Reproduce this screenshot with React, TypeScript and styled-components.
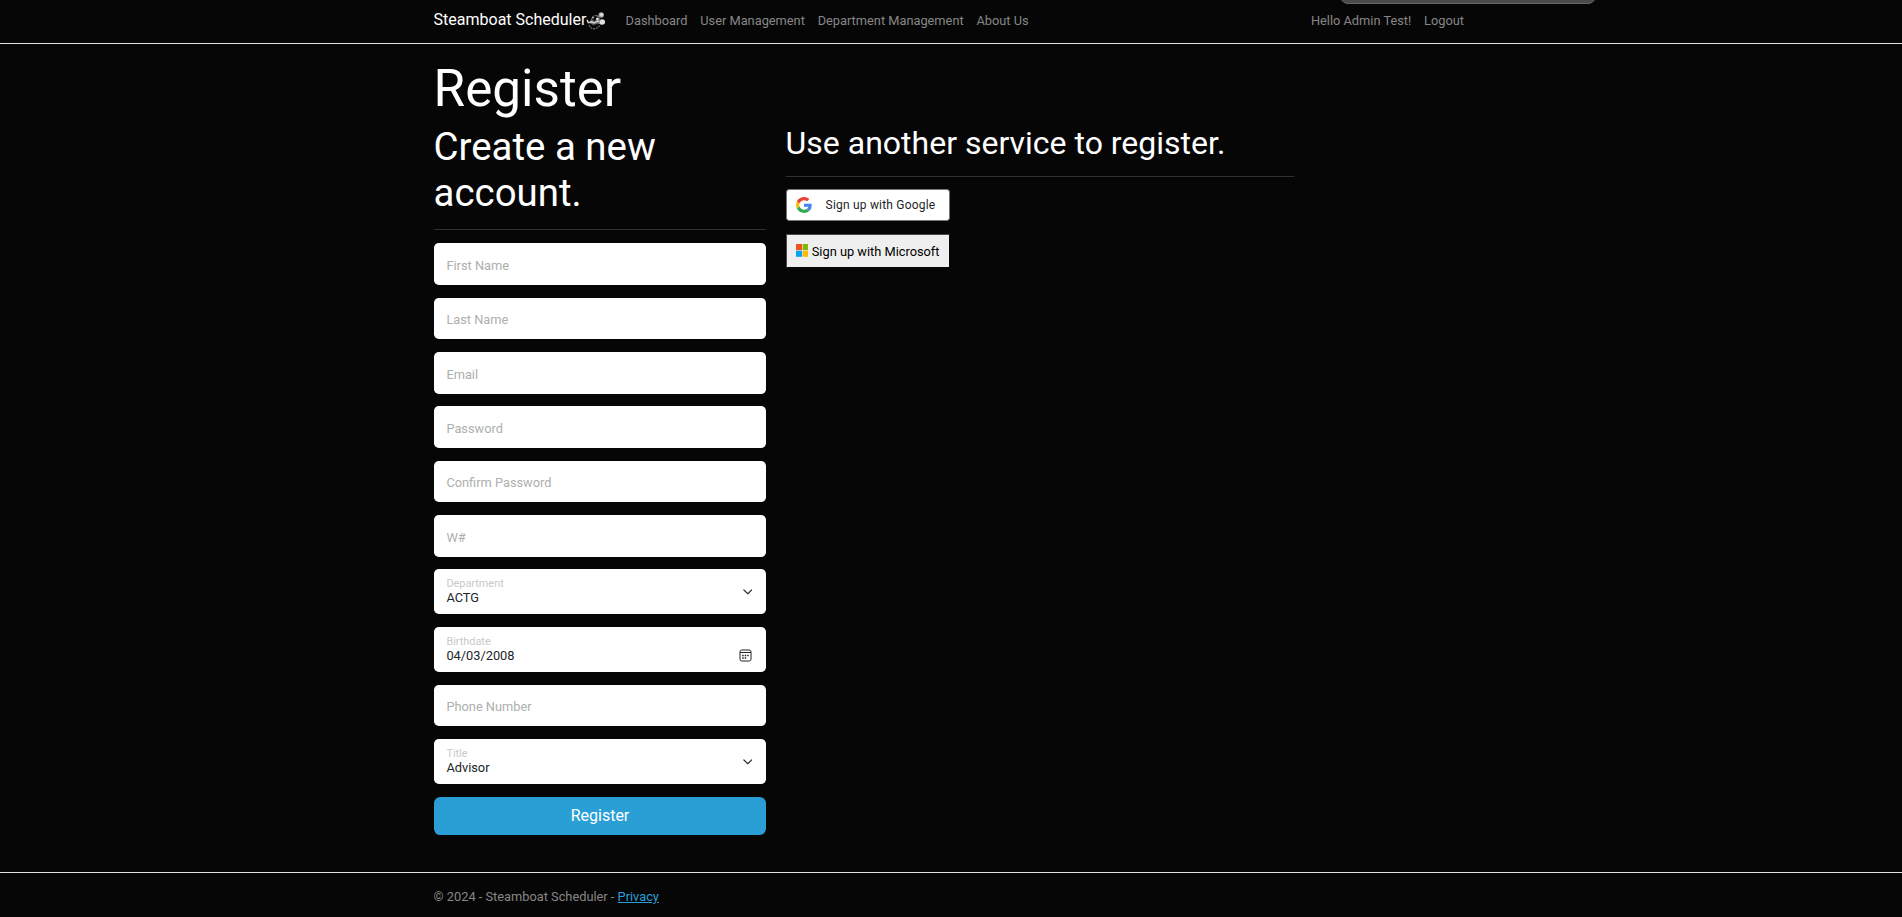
import React from "react";
import styled, { createGlobalStyle } from "styled-components";

const GlobalStyle = createGlobalStyle`
  *, *::before, *::after { box-sizing: border-box; }
  html, body { margin: 0; background: #060606; }
  body {
    font-family: Roboto, "Liberation Sans", sans-serif;
    font-size: 12.8px;
    line-height: 1.5;
    color: #adafae;
    overflow: hidden;
  }
`;

const Page = styled.div`
  position: relative;
  display: flex;
  flex-direction: column;
  width: 1904px;
  height: 917px;
  overflow: hidden;
  background: #060606;
`;

const Container = styled.div`
  width: 1056px;
  margin: 0 auto;
  padding: 0 9.6px;
`;

const Header = styled.header`
  flex: none;
  height: 44px;
  border-bottom: 1px solid #dee2e6;
`;

const NavBar = styled(Container)`
  display: flex;
  align-items: center;
  height: 40px;
`;

const Brand = styled.a`
  display: flex;
  align-items: center;
  width: 172.8px;
  margin-right: 12.8px;
  font-size: 16px;
  line-height: 24px;
  color: #fff;
  white-space: nowrap;
  svg { flex: none; width: 20px; height: 18px; margin-top: 2px; }
`;

const NavGroup = styled.nav<{ $end?: boolean }>`
  display: flex;
  margin-left: ${(p) => (p.$end ? "auto" : "0")};
`;

const NavLink = styled.a`
  padding: 1px 6.4px 0;
  color: #868686;
  white-space: nowrap;
`;

const Overlay = styled.div`
  position: absolute;
  top: -20px;
  left: 1340px;
  width: 256px;
  height: 24px;
  border: 1px solid #666;
  border-radius: 8px;
  background: #4a4a4a;
`;

const Main = styled(Container)`
  flex: 1;
  padding-top: 13.8px;
`;

const PageTitle = styled.h1`
  margin: 0 0 4.76px;
  font-size: 51.2px;
  line-height: 1.2;
  font-weight: 400;
  color: #fff;
`;

const Columns = styled.div`
  display: flex;
  gap: 19.2px;
`;

const Column = styled.section<{ $width: number }>`
  flex: none;
  width: ${(p) => p.$width}px;
`;

const Heading = styled.h2<{ $size: number }>`
  margin: 0;
  font-size: ${(p) => p.$size}px;
  line-height: 1.2;
  font-weight: 400;
  color: #fff;
`;

const Rule = styled.hr`
  height: 1px;
  margin: 13.21px 0 12.8px;
  border: 0;
  background: #303131;
`;

const Form = styled.form`
  display: flex;
  flex-direction: column;
  gap: 12.8px;
`;

const Field = styled.div<{ $filled?: boolean }>`
  display: flex;
  align-items: center;
  justify-content: space-between;
  height: ${(p) => (p.$filled ? 44.8 : 41.6)}px;
  padding: ${(p) => (p.$filled ? 0 : 3)}px 12.8px 0;
  border-radius: 4.8px;
  background: #fff;
  color: #212529;
  svg { flex: none; }
`;

const Placeholder = styled.span`
  color: #adafae;
`;

const Stack = styled.div`
  display: flex;
  flex-direction: column;
  margin-top: -0.3px;
`;

const FieldLabel = styled.span`
  font-size: 10.88px;
  line-height: 13px;
  color: #c8c9c9;
`;

const FieldValue = styled.span`
  line-height: 16px;
`;

const ChevronIcon = styled.svg`
  width: 9.6px;
  height: 9.6px;
  margin-right: 1.5px;
`;

const DateIcon = styled.svg`
  width: 13px;
  height: 13px;
  margin: 11.8px 1.6px 0 0;
`;

const Submit = styled.button`
  height: 38.4px;
  padding: 0;
  border: 0;
  border-radius: 6.4px;
  background: #2a9fd6;
  font: 400 16px/24px Roboto, "Liberation Sans", sans-serif;
  color: #fff;
`;

const Providers = styled.div`
  display: flex;
  flex-direction: column;
  align-items: flex-start;
  gap: 12.8px;
`;

const GoogleButton = styled.button`
  display: flex;
  align-items: center;
  width: 164px;
  height: 32px;
  padding: 0 0 0 9px;
  border: 1px solid #747775;
  border-radius: 3.2px;
  background: #fff;
  font: 400 12px/16px Roboto, "Liberation Sans", sans-serif;
  letter-spacing: 0.2px;
  color: #1f1f1f;
  white-space: nowrap;
  svg { width: 16px; height: 16px; margin-right: 14px; }
`;

const MicrosoftButton = styled.button`
  display: flex;
  align-items: center;
  width: 164px;
  height: 33.6px;
  padding: 0 0 0 9px;
  border: 1px solid #4a4a4a;
  border-right-color: #060606;
  border-bottom-color: #060606;
  background: #efefef;
  font: 400 12.8px/19px Roboto, "Liberation Sans", sans-serif;
  color: #000;
  white-space: nowrap;
  svg { width: 12.8px; height: 12.8px; margin-right: 3.4px; margin-top: -1px; }
  span { padding-top: 2px; }
`;

const Footer = styled.footer`
  flex: none;
  height: 45px;
  border-top: 1px solid #dee2e6;
  line-height: 48px;
  color: #868686;
  a { color: #2a9fd6; text-decoration: underline; }
`;

const MouseLogo = () => (
  <svg viewBox="0 0 20 18">
    <circle cx="15.2" cy="3" r="2.7" fill="#a8a8a8" />
    <circle cx="15.6" cy="2.6" r="1.6" fill="#dcdcdc" />
    <ellipse cx="16" cy="10" rx="3.1" ry="2.7" fill="#dedede" />
    <path d="M6 5 Q9 2 12.5 3.5 L14.5 8 L13 12 L7 13.5 L3.5 11Z" fill="#6a6a6a" />
    <path d="M6.5 5 Q9.5 3.2 11.5 5 L12 8 L10 7.3 L8.5 9.2 L6.3 7.5Z" fill="#0c0c0c" />
    <path d="M1 7.8 L2.3 10.6 L5.5 9.8 L8 11 L11.5 9.2 L13.5 9.5" fill="none" stroke="#d4d4d4" strokeWidth="1.4" />
    <path d="M3 13 Q4.5 16.5 8 16.8 Q11.5 16.6 13.7 13.5" fill="none" stroke="#6c6c6c" strokeWidth="1.2" strokeDasharray="2 0.8" />
    <path d="M4.5 12.7 Q8 14.8 11.5 12.4" fill="none" stroke="#0c0c0c" strokeWidth="1.6" />
    <circle cx="7" cy="5.4" r="1" fill="#b4b4b4" />
    <circle cx="11.3" cy="7" r="1.2" fill="#ececec" />
  </svg>
);

const Chevron = () => (
  <ChevronIcon viewBox="0 0 16 16" fill="none" stroke="#2c3136" strokeWidth="2" strokeLinecap="round" strokeLinejoin="round">
    <path d="m1.5 5 6.5 6.2 6.5-6.2" />
  </ChevronIcon>
);

const CalendarIcon = () => (
  <DateIcon viewBox="0 0 13 13" fill="none" stroke="#222">
    <rect x="1" y="1" width="11" height="11" rx="1.8" />
    <path d="M1 3.5H12" />
    <path d="M5.7 6.5H7.2M8.2 6.5H9.7M3.2 6.5H4.7M3.2 9H4.7M5.7 9H7.2" strokeWidth="1.3" />
  </DateIcon>
);

const GoogleLogo = () => (
  <svg viewBox="0 0 48 48">
    <path fill="#EA4335" d="M24 9.5c3.54 0 6.71 1.22 9.21 3.6l6.85-6.85C35.9 2.38 30.47 0 24 0 14.62 0 6.51 5.38 2.56 13.22l7.98 6.19C12.43 13.72 17.74 9.5 24 9.5z" />
    <path fill="#4285F4" d="M46.98 24.55c0-1.57-.15-3.09-.38-4.55H24v9.02h12.94c-.58 2.96-2.26 5.48-4.78 7.18l7.73 6c4.51-4.18 7.09-10.36 7.09-17.65z" />
    <path fill="#FBBC05" d="M10.53 28.59c-.48-1.45-.76-2.99-.76-4.59s.27-3.14.76-4.59l-7.98-6.19C.92 16.46 0 20.12 0 24c0 3.88.92 7.54 2.56 10.78l7.97-6.19z" />
    <path fill="#34A853" d="M24 48c6.48 0 11.93-2.13 15.89-5.81l-7.73-6c-2.15 1.45-4.92 2.3-8.16 2.3-6.26 0-11.57-4.22-13.47-9.91l-7.98 6.19C6.51 42.62 14.62 48 24 48z" />
  </svg>
);

const MicrosoftLogo = () => (
  <svg viewBox="0 0 21 21">
    <path fill="#f25022" d="M0 0h10v10H0z" />
    <path fill="#7fba00" d="M11 0h10v10H11z" />
    <path fill="#00a4ef" d="M0 11h10v10H0z" />
    <path fill="#ffb900" d="M11 11h10v10H11z" />
  </svg>
);

type FieldSpec = { label: string; value?: string; icon?: React.ReactNode };

const fields: FieldSpec[] = [
  { label: "First Name" },
  { label: "Last Name" },
  { label: "Email" },
  { label: "Password" },
  { label: "Confirm Password" },
  { label: "W#" },
  { label: "Department", value: "ACTG", icon: <Chevron /> },
  { label: "Birthdate", value: "04/03/2008", icon: <CalendarIcon /> },
  { label: "Phone Number" },
  { label: "Title", value: "Advisor", icon: <Chevron /> },
];

export default function App() {
  return (
    <>
      <GlobalStyle />
      <Page>
        <Header>
          <NavBar>
            <Brand>
              Steamboat Scheduler
              <MouseLogo />
            </Brand>
            <NavGroup>
              {["Dashboard", "User Management", "Department Management", "About Us"].map((t) => (
                <NavLink key={t}>{t}</NavLink>
              ))}
            </NavGroup>
            <NavGroup $end>
              <NavLink>Hello Admin Test!</NavLink>
              <NavLink>Logout</NavLink>
            </NavGroup>
          </NavBar>
        </Header>
        <Main>
          <PageTitle>Register</PageTitle>
          <Columns>
            <Column $width={332.8}>
              <Heading $size={38.4}>Create a new account.</Heading>
              <Rule />
              <Form>
                {fields.map((f) => (
                  <Field key={f.label} $filled={!!f.value}>
                    {f.value ? (
                      <Stack>
                        <FieldLabel>{f.label}</FieldLabel>
                        <FieldValue>{f.value}</FieldValue>
                      </Stack>
                    ) : (
                      <Placeholder>{f.label}</Placeholder>
                    )}
                    {f.icon}
                  </Field>
                ))}
                <Submit type="button">Register</Submit>
              </Form>
            </Column>
            <Column $width={508.8}>
              <Heading $size={32}>Use another service to register.</Heading>
              <Rule />
              <Providers>
                <GoogleButton type="button">
                  <GoogleLogo />
                  Sign up with Google
                </GoogleButton>
                <MicrosoftButton type="button">
                  <MicrosoftLogo />
                  <span>Sign up with Microsoft</span>
                </MicrosoftButton>
              </Providers>
            </Column>
          </Columns>
        </Main>
        <Footer>
          <Container>
            © 2024 - Steamboat Scheduler - <a>Privacy</a>
          </Container>
        </Footer>
        <Overlay />
      </Page>
    </>
  );
}
